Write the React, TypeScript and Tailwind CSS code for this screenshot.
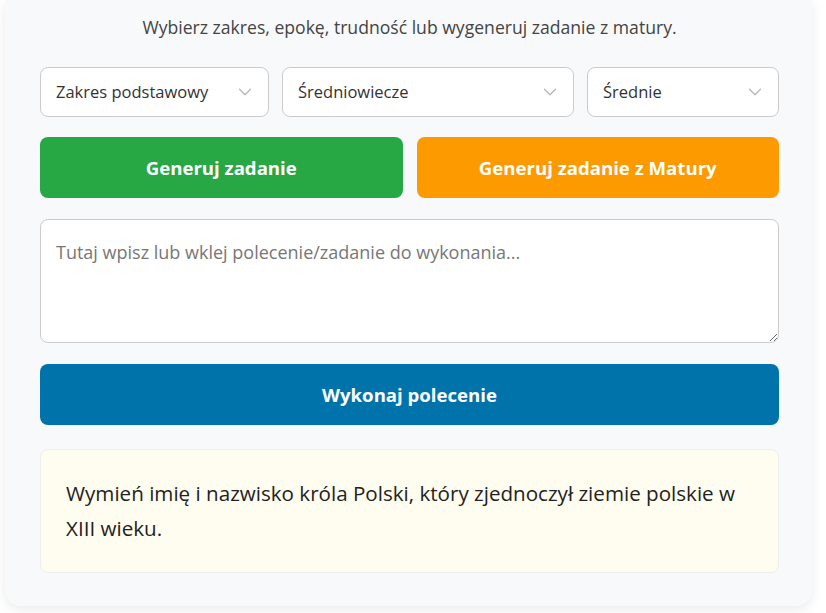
import { ChevronDown } from 'lucide-react';

const selects = [
  { value: 'Zakres podstawowy', width: 'w-[229px]' },
  { value: 'Średniowiecze', width: 'flex-1' },
  { value: 'Średnie', width: 'w-[192px]' },
];

export default function App() {
  return (
    <div className="min-h-screen bg-white font-['Open_Sans',sans-serif] text-[#333]">
      <div className="ml-[5px] w-[807px] rounded-b-2xl bg-[#f8f9fa] pb-[33px] pl-[35px] pr-[33px] pt-[13px] shadow-[0_4px_12px_rgba(0,0,0,0.08)]">
        <p className="text-center text-[17.6px] leading-[28px] text-[#444]">
          Wybierz zakres, epokę, trudność lub wygeneruj zadanie z matury.
        </p>

        {/* Selects */}
        <div className="mt-[26px] flex gap-[13px]">
          {selects.map((s) => (
            <div
              key={s.value}
              className={`${s.width} flex h-[50px] items-center justify-between rounded-lg border border-[#ccc] bg-white pl-[15px] pr-[12px] text-[16.5px] text-[#333]`}
            >
              <span>{s.value}</span>
              <ChevronDown className="h-[22px] w-[22px] text-[#b5b5b5]" strokeWidth={1.3} />
            </div>
          ))}
        </div>

        {/* Generate buttons */}
        <div className="mt-[20px] flex gap-[14px]">
          <button className="h-[61px] flex-1 rounded-lg bg-[#28a745] text-[18.6px] font-bold text-white">
            Generuj zadanie
          </button>
          <button className="h-[61px] flex-1 rounded-lg bg-[#fd9a00] text-[18.6px] font-bold text-white">
            Generuj zadanie z Matury
          </button>
        </div>

        <textarea
          className="mt-[21px] block h-[124px] w-full rounded-lg border border-[#ccc] bg-white px-[15px] py-[19px] text-[18px] leading-[26px] text-[#333] placeholder:text-[#777] outline-none"
          placeholder="Tutaj wpisz lub wklej polecenie/zadanie do wykonania..."
        />

        <button className="mt-[21px] block h-[61px] w-full rounded-lg bg-[#0073aa] text-[18.6px] font-bold text-white">
          Wykonaj polecenie
        </button>

        {/* Result */}
        <div className="mt-[24px] rounded-lg border border-[#eee] bg-[#fffdef] px-[25px] py-[26px] text-[20.6px] leading-[35px] text-[#222]">
          Wymień imię i nazwisko króla Polski, który zjednoczył ziemie polskie w XIII wieku.
        </div>
      </div>
    </div>
  );
}
